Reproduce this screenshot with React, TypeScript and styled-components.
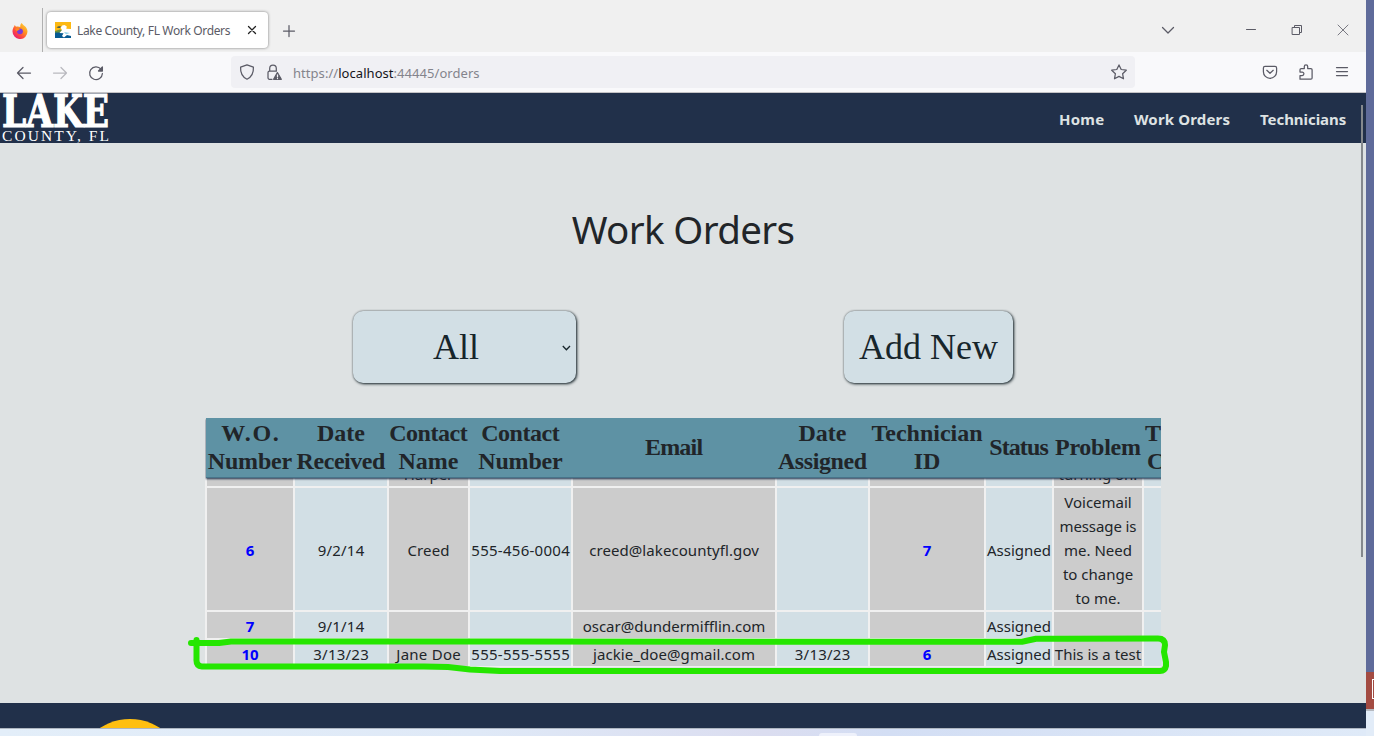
import React from "react";
import styled, { createGlobalStyle } from "styled-components";

const Global = createGlobalStyle`
  * { box-sizing: border-box; }
  body { margin: 0; overflow: hidden; font-family: "Noto Sans", sans-serif; color: #212529; }
`;

const Screen = styled.div`
  width: 1374px;
  height: 736px;
  display: flex;
  overflow: hidden;
  background: #e2ecf8;
`;
const Main = styled.div`
  width: 1366px;
  display: flex;
  flex-direction: column;
`;
const Edge = styled.div`
  width: 8px;
  display: flex;
  flex-direction: column;
`;
const EdgeBlue = styled.div`
  height: 672px;
  background: #5f6b9a;
`;
const EdgeRed = styled.div`
  height: 37px;
  padding: 7px 0 0 6px;
  background: #a34b42;
`;
const EdgeBox = styled.div`
  height: 20px;
  border: 1px solid #fff;
  border-right: 0;
`;
const EdgeLine = styled.div`
  height: 2px;
  background: #b5b9c0;
`;

const TabStrip = styled.div`
  height: 52px;
  background: #f0f0f0;
  display: flex;
  align-items: center;
`;
const Pinned = styled.div`
  width: 43px;
  height: 44px;
  margin-top: 8px;
  padding: 14px 0 0 12px;
  border-right: 1px solid #b0b0b0;
`;
const Tab = styled.div`
  width: 221px;
  height: 36px;
  margin: 8px 0 0 4px;
  padding: 0 9px 0 8px;
  display: flex;
  align-items: center;
  background: #fff;
  border-radius: 4px;
  box-shadow: 0 0 3px rgba(0, 0, 0, 0.5);
`;
const TabTitle = styled.span`
  flex: 1;
  padding: 1px 0 0 6px;
  font-size: 12px;
  letter-spacing: -0.35px;
  color: #5b5b66;
  white-space: nowrap;
`;
const NewTab = styled.div`
  margin: 9px 0 0 13px;
  height: 16px;
  flex: 1;
`;
const WindowButtons = styled.div`
  display: flex;
  align-items: center;
  margin: 8px 16px 0 0;
  height: 16px;
`;
const WinIcon = styled.div<{ $gap: number }>`
  height: 14px;
  margin-left: ${(p) => p.$gap}px;
`;

const Toolbar = styled.div`
  height: 41px;
  display: flex;
  align-items: center;
  background: #f9f9fb;
  border-bottom: 1px solid #c4c3c6;
  padding: 0 16px;
`;
const NavIcons = styled.div`
  width: 215px;
  display: flex;
  gap: 20px;
  padding-top: 1px;
`;
const UrlBar = styled.div`
  width: 904px;
  height: 32px;
  display: flex;
  align-items: center;
  background: #f0f0f4;
  border-radius: 4px;
  padding: 0 8px;
`;
const Url = styled.div`
  flex: 1;
  padding: 2px 0 0 11px;
  font-size: 13px;
  letter-spacing: 0.05px;
  color: #84848c;
  b { font-weight: 400; color: #15141a; }
`;
const RightIcons = styled.div`
  flex: 1;
  display: flex;
  justify-content: flex-end;
  gap: 20px;
`;
const Icon = styled.svg`
  display: block;
  flex: none;
  fill: none;
  stroke: #5b5b66;
  stroke-width: 1.25;
  stroke-linecap: round;
  stroke-linejoin: round;
`;
const CloseIcon = styled(Icon)`
  stroke: #222;
`;
const DimIcon = styled(Icon)`
  stroke: #b9b9bf;
`;
const LockIcon = styled(Icon)`
  margin-left: 11px;
`;

const Page = styled.div`
  height: 635px;
  position: relative;
  background: #dee2e3;
  display: flex;
  flex-direction: column;
  overflow: hidden;
`;
const Scrollbar = styled.div`
  position: absolute;
  left: 1361px;
  top: 12px;
  width: 2px;
  height: 452px;
  background: #85898d;
`;
const SiteHeader = styled.header`
  height: 50px;
  background: #21304a;
  display: flex;
  justify-content: space-between;
`;
const SiteNav = styled.nav`
  display: flex;
  gap: 30px;
  align-items: center;
  padding: 1px 20px 0 0;
`;
const SiteLink = styled.a<{ $w: number; $ls: number }>`
  width: ${(p) => p.$w}px;
  font-size: 15px;
  font-weight: 700;
  letter-spacing: ${(p) => p.$ls}px;
  color: #dee2e3;
  white-space: nowrap;
`;
const Title = styled.h1`
  margin: 62px 0 0;
  height: 48px;
  font-size: 38.5px;
  line-height: 48px;
  font-weight: 400;
  letter-spacing: -0.65px;
  text-align: center;
`;
const Controls = styled.div`
  display: flex;
  justify-content: space-between;
  width: 660px;
  margin: 58px 0 0 353px;
`;
const Button = styled.div<{ $w: number; $pad?: number }>`
  width: ${(p) => p.$w}px;
  height: 72px;
  display: flex;
  align-items: center;
  justify-content: center;
  position: relative;
  padding-right: ${(p) => p.$pad || 0}px;
  background: #d2dfe5;
  border-radius: 10px;
  box-shadow: 1px 1px 3px #17252b, 0 0 2px rgba(0, 0, 0, 0.4);
  font-family: "Liberation Serif", serif;
  font-size: 36px;
  color: #17252b;
`;
const Caret = styled.svg`
  position: absolute;
  right: 5px;
  top: 34px;
`;

const columns = "86px 92px 79px 101px 202px 91px 114px 66px 88px 40px";
const TableView = styled.div`
  width: 956px;
  height: 249px;
  margin: 35px 0 0 205px;
  padding-left: 1px;
  overflow: hidden;
  background: #f0f0f0;
`;
const HeadRow = styled.div`
  position: relative;
  height: 60px;
  width: 960px;
  display: grid;
  grid-template-columns: ${columns};
  column-gap: 2px;
  padding: 0 0 1px 1px;
  background: #5e92a4;
  border-bottom: 1px solid #47748a;
  box-shadow: 0 1px 2px #21304a;
`;
const Head = styled.div<{ $left?: boolean }>`
  display: flex;
  flex-direction: column;
  justify-content: center;
  align-items: ${(p) => (p.$left ? "flex-start" : "center")};
  font-family: "Liberation Serif", serif;
  font-weight: 700;
  font-size: 24px;
  line-height: 28px;
  white-space: nowrap;
`;
const Word = styled.span<{ $ls?: number; $in?: number }>`
  letter-spacing: ${(p) => p.$ls || 0}px;
  margin-right: ${(p) => -(p.$ls || 0)}px;
  padding-left: ${(p) => p.$in || 0}px;
`;
const Row = styled.div<{ $h: number }>`
  height: ${(p) => p.$h}px;
  width: 960px;
  display: grid;
  grid-template-columns: ${columns};
  grid-template-rows: 100%;
  column-gap: 2px;
  padding-left: 1px;
  margin-bottom: 2px;
  overflow: hidden;
`;
const Cell = styled.div<{ $odd: boolean; $end?: boolean }>`
  display: flex;
  flex-direction: column;
  align-items: center;
  justify-content: ${(p) => (p.$end ? "flex-end" : "center")};
  min-width: 0;
  padding-top: ${(p) => (p.$end ? 0 : 2)}px;
  background: ${(p) => (p.$odd ? "#cccccc" : "#d2dfe5")};
  font-size: 15px;
  line-height: 24px;
  white-space: nowrap;
`;
const IdLink = styled.a`
  color: #0000ff;
  font-weight: 700;
`;
const Marker = styled.svg`
  position: absolute;
  left: 180px;
  top: 537px;
`;
const Footer = styled.footer`
  margin-top: auto;
  height: 25px;
  background: #21304a;
  overflow: hidden;
  padding: 16px 0 0 75px;
`;
const Sun = styled.div`
  width: 110px;
  height: 110px;
  border-radius: 50%;
  background: #ffbf10;
`;
const Taskbar = styled.div`
  height: 8px;
  border-top: 1px solid #aeb6c1;
  background: linear-gradient(90deg, #e3eef9 0, #dfe9f7 35%, #dbddf0 56%, #d3def4 65%, #dfeaf8 100%);
  padding: 4px 0 0 819px;
`;
const TaskItem = styled.div`
  width: 38px;
  height: 3px;
  border-radius: 3px 3px 0 0;
  background: #eef1fb;
`;

type Txt = [string, number?, number?];
const heads: Txt[][] = [
  [["W.O.", 1.7], ["Number", -0.2]],
  [["Date"], ["Received", -0.45]],
  [["Contact", -0.45], ["Name"]],
  [["Contact", -0.45], ["Number", -0.2]],
  [["Email", -0.8]],
  [["Date"], ["Assigned", -0.4]],
  [["Technician"], ["ID"]],
  [["Status", -0.9]],
  [["Problem", -0.25]],
  [["T", 0, 1], ["C", 0, 3]],
];

type RowData = { h: number; cells: Txt[][] };
const rows: RowData[] = [
  {
    h: 122,
    cells: [[["6"]], [["9/2/14", 0.2]], [["Creed", 0.1]], [["555-456-0004", 0.27]], [["creed@lakecountyfl.gov", 0.08]], [], [["7"]], [["Assigned"]],
      [["Voicemail"], ["message is", -0.1], ["me. Need"], ["to change"], ["to me."]], []],
  },
  {
    h: 26,
    cells: [[["7"]], [["9/1/14", 0.2]], [], [], [["oscar@dundermifflin.com"]], [], [], [["Assigned"]], [], []],
  },
  {
    h: 26,
    cells: [[["10"]], [["3/13/23", 0.25]], [["Jane Doe", 0.25]], [["555-555-5555", 0.27]], [["jackie_doe@gmail.com", 0.08]], [["3/13/23", 0.25]], [["6"]],
      [["Assigned"]], [["This is a test"]], []],
  },
];
const clipped = ["", "", "Harper", "", "", "", "", "", "turning on.", ""];

const Firefox = () => (
  <svg width="16" height="16" viewBox="0 0 16 16">
    <defs>
      <linearGradient id="fx" x1="1" y1="0" x2="0.2" y2="1">
        <stop offset="0" stopColor="#ffe14a" />
        <stop offset="0.4" stopColor="#ff9a1f" />
        <stop offset="0.7" stopColor="#ff4b3e" />
        <stop offset="1" stopColor="#e3157a" />
      </linearGradient>
    </defs>
    <path d="M9.6 0c1 1.200 1.500 1.900 3 3 1.700 1.300 2.900 3.300 2.900 5.600A7.400 7.400 0 0 1 .5 8.500C.5 6.500 1.200 4.700 2.300 3.300l.4-1.300 1.300 1.700c1.500-.5 3-.3 4.300.3C8 2.800 8.500 1 9.600 0z" fill="url(#fx)" />
    <circle cx="8" cy="8.300" r="2.900" fill="#7a3bd8" />
    <path d="M3 6c1.500-1.200 3-.8 5 .2-1.500.4-1.500 1.600-3.500 1.900z" fill="#ff8a1c" />
  </svg>
);

const Favicon = () => (
  <svg width="16" height="16" viewBox="0 0 16 16">
    <path d="M0 0h16v16H0z" fill="#fdb913" />
    <path d="M0 9 5 7.500l3 1-1 3H0z" fill="#6b8f3c" />
    <path d="M0 10.800c3-.8 5 0 8-.3l8 2.300V16H0z" fill="#075a92" />
    <path d="M16 7v7l-4-1-3 2.500-2-1.500 1.500-2.700L4.500 11 7 8 5.500 5.500l1.700-2L9.500 3l2.300 1.500-.5 2.200z" fill="#fff" />
    <path d="M1.500 5.500C3 4 5 4 6.500 4.800L4.500 6z" fill="#35525b" />
    <path d="m9 10 6 1-4 1.200z" fill="#8ed0e8" />
  </svg>
);

const Logo = () => (
  <svg width="112" height="50" viewBox="0 0 112 50" fill="#fff">
    <text x="2" y="33.500" fontFamily="DejaVu Serif" fontWeight="700" fontSize="44" stroke="#fff" strokeWidth="1.200" textLength="107" lengthAdjust="spacingAndGlyphs">LAKE</text>
    <text x="2" y="48" fontFamily="Liberation Serif" fontSize="15.500" textLength="107" lengthAdjust="spacing">COUNTY, FL</text>
  </svg>
);

const Words = ({ items }: { items: Txt[] }) => (
  <>
    {items.map(([text, ls, inset], i) => (
      <Word key={i} $ls={ls} $in={inset}>{text}</Word>
    ))}
  </>
);

export default function App() {
  return (
    <Screen>
      <Global />
      <Main>
        <TabStrip>
          <Pinned><Firefox /></Pinned>
          <Tab>
            <Favicon />
            <TabTitle>Lake County, FL Work Orders</TabTitle>
            <CloseIcon width="14" height="14"><path d="m3.500 3.500 7 7M10.500 3.500l-7 7" /></CloseIcon>
          </Tab>
          <NewTab>
            <Icon width="16" height="16"><path d="M8 2.500v11M2.500 8h11" /></Icon>
          </NewTab>
          <WindowButtons>
            <WinIcon $gap={0}><Icon width="14" height="14"><path d="m1.500 4.500 5.500 5.500 5.500-5.500" /></Icon></WinIcon>
            <WinIcon $gap={69}><Icon width="14" height="14"><path d="M2.500 6.500h9" style={{ strokeWidth: 1 }} /></Icon></WinIcon>
            <WinIcon $gap={32}><Icon width="14" height="14"><path d="M2.500 4.500h7v7h-7zM4.500 4.500v-2h7v7h-2" style={{ strokeWidth: 1 }} /></Icon></WinIcon>
            <WinIcon $gap={32}><Icon width="14" height="14"><path d="m2 2 10 10M12 2 2 12" style={{ strokeWidth: 0.8 }} /></Icon></WinIcon>
          </WindowButtons>
        </TabStrip>
        <Toolbar>
          <NavIcons>
            <Icon width="16" height="16"><path d="M14.500 8h-13M7 2.500 1.500 8 7 13.500" /></Icon>
            <DimIcon width="16" height="16"><path d="M1.500 8h13M9 2.500 14.500 8 9 13.500" /></DimIcon>
            <Icon width="16" height="16"><path d="M13 4.200A6.400 6.400 0 1 0 14.400 8.500" /><path d="M14.400 2v4H10.500z" fill="#5b5b66" /></Icon>
          </NavIcons>
          <UrlBar>
            <Icon width="16" height="16"><path d="M8 .8 1.600 3.200c-.3 5 1.200 9.400 6.400 12 5.200-2.600 6.700-7 6.400-12z" /></Icon>
            <LockIcon width="16" height="16">
              <path d="M6 15.300H3.500a1.500 1.500 0 0 1-1.500-1.500V8.500A1.500 1.500 0 0 1 3.500 7H10.500M3.700 7V4.400a3.300 3.300 0 0 1 6.600 0V7" />
              <path d="M11.400 8.600 7.600 15.300h7.700z" fill="#5b5b66" />
              <path d="M11.500 10.800v2M11.500 14.400v.1" stroke="#f0f0f4" />
            </LockIcon>
            <Url>https://<b>localhost</b>:44445/orders</Url>
            <Icon width="16" height="16"><path d="m8 .9 2.200 4.600 5.100.7-3.700 3.500.9 5.100L8 12.400l-4.500 2.400.9-5.100L.7 6.200l5.100-.7z" /></Icon>
          </UrlBar>
          <RightIcons>
            <Icon width="16" height="16"><path d="M3 2.300h10a1.600 1.600 0 0 1 1.600 1.600v3.800a6.600 6.600 0 0 1-13.200 0V3.900A1.600 1.600 0 0 1 3 2.300zM4.800 6.300 8 9.300l3.200-3" /></Icon>
            <Icon width="16" height="16"><path d="M2 15.200V11.500h2.200a1.700 1.700 0 0 0 0-3.400H2V5.800A1.200 1.200 0 0 1 3.200 4.600H6.300V2.600a1.700 1.700 0 0 1 3.400 0v2h3.200a1.200 1.200 0 0 1 1.200 1.200v8.200a1.200 1.200 0 0 1-1.200 1.200z" /></Icon>
            <Icon width="16" height="16"><path d="M2.500 3.500h11M2.500 7.500h11M2.500 11.500h11" /></Icon>
          </RightIcons>
        </Toolbar>
        <Page>
          <SiteHeader>
            <Logo />
            <SiteNav>
              <SiteLink $w={45} $ls={0.25}>Home</SiteLink>
              <SiteLink $w={96} $ls={0.15}>Work Orders</SiteLink>
              <SiteLink $w={86} $ls={-0.05}>Technicians</SiteLink>
            </SiteNav>
          </SiteHeader>
          <Title>Work Orders</Title>
          <Controls>
            <Button $w={223} $pad={17}>
              All
              <Caret width="9" height="7" fill="none" stroke="#17252b" strokeWidth="1.300"><path d="m.8 1 3.600 3.800L8 1" /></Caret>
            </Button>
            <Button $w={169}>Add New</Button>
          </Controls>
          <TableView>
            <HeadRow>
              {heads.map((h, i) => <Head key={i} $left={i === 9}><Words items={h} /></Head>)}
            </HeadRow>
            <Row $h={8}>
              {clipped.map((t, i) => <Cell key={i} $odd={i % 2 === 0} $end>{t}</Cell>)}
            </Row>
            {rows.map((r, n) => (
              <Row key={n} $h={r.h}>
                {r.cells.map((c, i) => (
                  <Cell key={i} $odd={i % 2 === 0}>
                    {i === 0 || i === 6 ? <IdLink><Words items={c} /></IdLink> : <Words items={c} />}
                  </Cell>
                ))}
              </Row>
            ))}
          </TableView>
          <Marker width="1000" height="50" fill="none" stroke="#25e600" strokeWidth="6" strokeLinecap="round" strokeLinejoin="round">
            <path d="M11 13H39L51 11.500H200L600 11.800H842L856 8.800H885L978 8.500Q985 8.500 985 15L984 22 986 32V36Q985 41 980 41H320L290 39.500 268 37 244 36.500H22Q16 36 16.500 29V10" />
          </Marker>
          <Footer><Sun /></Footer>
          <Scrollbar />
        </Page>
        <Taskbar><TaskItem /></Taskbar>
      </Main>
      <Edge>
        <EdgeBlue />
        <EdgeRed><EdgeBox /></EdgeRed>
        <EdgeLine />
      </Edge>
    </Screen>
  );
}
